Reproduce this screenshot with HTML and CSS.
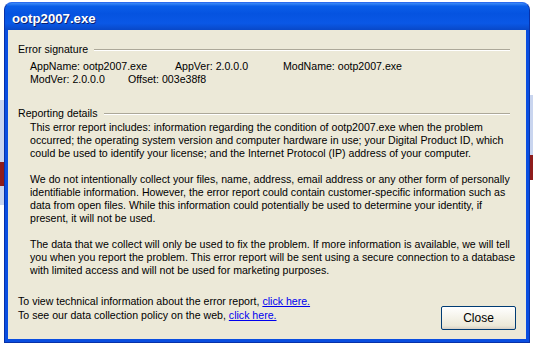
FILE: index.html
```html
<!DOCTYPE html>
<html>
<head>
<meta charset="utf-8">
<link rel="stylesheet" href="styles.css">
</head>
<body>
<div class="window">
  <div class="titlebar">ootp2007.exe</div>
  <div class="client">
    <div class="group">
      <div class="group-head"><span>Error signature</span><div class="rule"></div></div>
      <div class="sig">
        <div class="sig-row"><span class="c1">AppName: ootp2007.exe</span><span class="c2">AppVer: 2.0.0.0</span><span>ModName: ootp2007.exe</span></div>
        <div class="sig-row"><span class="c3">ModVer: 2.0.0.0</span><span>Offset: 003e38f8</span></div>
      </div>
    </div>
    <div class="group group-report">
      <div class="group-head"><span>Reporting details</span><div class="rule"></div></div>
      <div class="details">
        <p>This error report includes: information regarding the condition of ootp2007.exe when the problem<br>occurred; the operating system version and computer hardware in use; your Digital Product ID, which<br>could be used to identify your license; and the Internet Protocol (IP) address of your computer.</p>
        <p>We do not intentionally collect your files, name, address, email address or any other form of personally<br>identifiable information. However, the error report could contain customer-specific information such as<br>data from open files. While this information could potentially be used to determine your identity, if<br>present, it will not be used.</p>
        <p>The data that we collect will only be used to fix the problem. If more information is available, we will tell<br>you when you report the problem. This error report will be sent using a secure connection to a database<br>with limited access and will not be used for marketing purposes.</p>
      </div>
    </div>
    <div class="footer">
      <div class="links">
        <div>To view technical information about the error report, <a href="#">click here.</a></div>
        <div>To see our data collection policy on the web, <a href="#">click here.</a></div>
      </div>
      <button class="btn">Close</button>
    </div>
  </div>
</div>
</body>
</html>
```
FILE: styles.css
```css
html, body {
  margin: 0;
  padding: 0;
}
body {
  width: 533px;
  height: 345px;
  overflow: hidden;
  background:
    linear-gradient(to bottom, #fff 0, #fff 100px, #c9d5ef 100px, #c9d5ef 162px, #8e1c1c 162px, #8e1c1c 186px, #c9d5ef 186px, #c9d5ef 205px, #fff 205px) left top / 4px 345px no-repeat,
    linear-gradient(to bottom, #fff 0, #fff 95px, #c9d5ef 95px, #c9d5ef 155px, #8e1c1c 155px, #8e1c1c 180px, #fff 180px) right top / 3px 345px no-repeat,
    #fff;
  font-family: Tahoma, "Liberation Sans", Arial, sans-serif;
  font-size: 10.6px;
  color: #000;
}
.window {
  margin: 2px 0 0 4px;
  width: 526px;
  height: 341px;
  box-sizing: border-box;
  background: #0a4ee0;
  border-radius: 8px 8px 0 0;
  border: 1px solid #0831a8;
  border-top-color: #2a6cf0;
  display: flex;
  flex-direction: column;
  padding: 0 3px 3px 3px;
  overflow: hidden;
}
.titlebar {
  height: 27px;
  flex: none;
  margin: 0 -3px;
  padding: 4px 0 0 7px;
  box-sizing: border-box;
  display: flex;
  align-items: center;
  color: #fff;
  font-family: "Liberation Sans", Arial, sans-serif;
  font-weight: bold;
  font-size: 13.2px;
  text-shadow: 1px 1px 0 #0a1e6e;
  background: linear-gradient(to bottom, #3d8bf7 0%, #0a5ee8 12%, #0553e0 40%, #0a58e6 75%, #0848c8 100%);
}
.client {
  flex: 1;
  background: #ece9d8;
  display: flex;
  flex-direction: column;
  padding: 13px 16px 0 10px;
}
.group-head {
  display: flex;
  align-items: center;
  height: 13px;
  line-height: 13px;
}
.group-head span {
  margin-right: 6px;
}
.rule {
  flex: 1;
  height: 0;
  border-top: 1px solid #aca899;
  border-bottom: 1px solid #fff;
}
.sig {
  padding: 4px 0 0 12px;
  line-height: 13px;
}
.c1 { display: inline-block; width: 145px; }
.c2 { display: inline-block; width: 108px; }
.c3 { display: inline-block; width: 98px; }
.group-report {
  margin-top: 21px;
}
.details {
  padding: 1px 0 0 12px;
  line-height: 13px;
  white-space: nowrap;
}
.details p {
  margin: 0 0 13px 0;
}
.footer {
  display: flex;
  align-items: flex-start;
  justify-content: space-between;
  margin: 4px -6px 0 0;
  line-height: 14px;
}
.links a {
  color: #0000ee;
}
.btn {
  margin-top: 12px;
  width: 75px;
  height: 24px;
  font-family: inherit;
  font-size: 12px;
  background: linear-gradient(to bottom, #fff, #ece9d8 85%, #d6d0c5);
  border: 1px solid #003c74;
  border-radius: 2px;
  color: #000;
  padding: 0;
}
```
